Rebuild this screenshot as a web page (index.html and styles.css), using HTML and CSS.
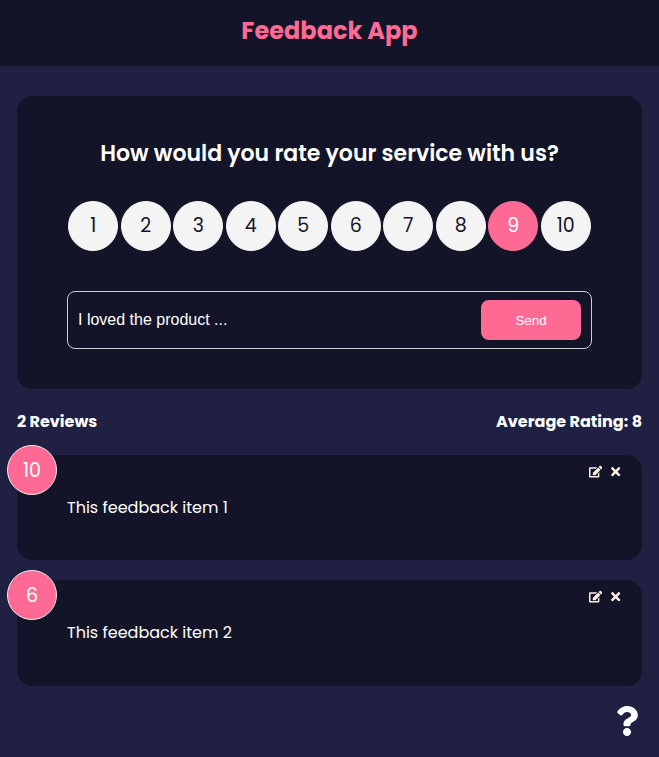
FILE: index.html
```html
<!DOCTYPE html>
<html lang="en">
<head>
<meta charset="utf-8">
<title>Feedback App</title>
<link rel="stylesheet" href="styles.css">
</head>
<body>
<svg class="sprite" aria-hidden="true">
  <symbol id="edit" viewBox="0 0 576 512"><path d="M402.6 83.2l90.2 90.2c3.8 3.8 3.8 10 0 13.8L274.4 405.6l-92.8 10.3c-12.4 1.4-22.9-9.1-21.5-21.5l10.3-92.8L388.8 83.2c3.8-3.8 10-3.8 13.8 0zm162-22.9l-48.8-48.8c-15.2-15.2-39.9-15.2-55.2 0l-35.4 35.4c-3.8 3.8-3.8 10 0 13.8l90.2 90.2c3.8 3.8 10 3.8 13.8 0l35.4-35.4c15.2-15.3 15.2-40 0-55.2zM384 346.2V448H64V128h229.8c3.2 0 6.2-1.3 8.5-3.5l40-40c7.6-7.6 2.2-20.5-8.5-20.5H48C21.5 64 0 85.5 0 112v352c0 26.5 21.5 48 48 48h352c26.5 0 48-21.5 48-48V306.2c0-10.7-12.9-16-20.5-8.5l-40 40c-2.2 2.3-3.5 5.3-3.5 8.5z"/></symbol>
  <symbol id="times" viewBox="0 0 352 512"><path d="M242.72 256l100.07-100.07c12.28-12.28 12.28-32.19 0-44.48l-22.24-22.24c-12.28-12.28-32.19-12.28-44.48 0L176 189.28 75.93 89.21c-12.28-12.28-32.19-12.28-44.48 0L9.21 111.45c-12.28 12.28-12.28 32.19 0 44.48L109.28 256 9.21 356.07c-12.28 12.28-12.28 32.19 0 44.48l22.24 22.24c12.28 12.28 32.2 12.28 44.48 0L176 322.72l100.07 100.07c12.28 12.28 32.2 12.28 44.48 0l22.24-22.24c12.28-12.28 12.28-32.19 0-44.48L242.72 256z"/></symbol>
</svg>
<header class="header"><h1 class="title">Feedback App</h1></header>
<main class="container">
  <section class="card form-card">
    <h2 class="question">How would you rate your service with us?</h2>
    <ul class="rating">
      <li>1</li><li>2</li><li>3</li><li>4</li><li>5</li><li>6</li><li>7</li><li>8</li><li class="selected">9</li><li>10</li>
    </ul>
    <div class="input-group">
      <span class="review-text">I loved the product ...</span>
      <button class="send">Send</button>
    </div>
  </section>
  <div class="stats"><h4 class="reviews">2 Reviews</h4><h4 class="average">Average Rating: 8</h4></div>
  <article class="card item">
    <div class="score">10</div>
    <div class="actions"><svg><use href="#edit"/></svg><svg><use href="#times"/></svg></div>
    <p class="item-text">This feedback item 1</p>
  </article>
  <article class="card item">
    <div class="score">6</div>
    <div class="actions"><svg><use href="#edit"/></svg><svg><use href="#times"/></svg></div>
    <p class="item-text">This feedback item 2</p>
  </article>
  <footer class="about">
    <svg viewBox="0 0 384 512"><path d="M202.021 0C122.202 0 70.503 32.703 29.914 91.026c-7.363 10.58-5.093 25.086 5.178 32.874l43.138 32.709c10.373 7.865 25.132 6.026 33.253-4.148 25.049-31.381 43.63-49.449 82.757-49.449 30.764 0 68.816 19.799 68.816 49.631 0 22.552-18.617 34.134-48.993 51.164-35.423 19.86-82.299 44.576-82.299 106.405V320c0 13.255 10.745 24 24 24h72.471c13.255 0 24-10.745 24-24v-5.773c0-42.86 125.268-44.645 125.268-160.627C377.504 66.256 286.902 0 202.021 0zM192 373.459c-38.196 0-69.271 31.075-69.271 69.271 0 38.195 31.075 69.27 69.271 69.27s69.271-31.075 69.271-69.271-31.075-69.27-69.271-69.27z"/></svg>
  </footer>
</main>
</body>
</html>
```
FILE: styles.css
```css
* { box-sizing: border-box; margin: 0; padding: 0; }
body {
  background: #202142;
  color: #fff;
  font: 16px/24px Poppins, Inter, sans-serif;
}
.sprite { display: none; }
.header { height: 66px; padding-top: 13px; background: #131428; text-align: center; }
.title { font-size: 24px; line-height: 36px; font-weight: 700; color: #ff6a95; }
.container { padding: 30px 17px 0; }
.card { background: #131428; border-radius: 15px; }
.form-card { height: 293px; padding: 41px 50px 40px; }
.question { font-size: 22px; line-height: 34px; font-weight: 600; text-align: center; white-space: nowrap; }
.rating { display: flex; justify-content: space-around; list-style: none; margin: 30px 0 40px; }
.rating li {
  width: 50px; height: 50px; border: 1px solid #f4f4f4; border-radius: 50%;
  background: #f4f4f4; color: #131428;
  font-size: 19px; line-height: 48px; text-align: center;
}
.rating .selected { background: #ff6a95; border-color: #ff6a95; color: #fff; }
.input-group {
  display: flex; align-items: center; justify-content: space-between;
  height: 58px; padding: 0 10px; border: 1px solid #ccc; border-radius: 8px;
}
.review-text { font: 16px "Liberation Sans", sans-serif; }
.send {
  width: 100px; height: 40px; border: 0; border-radius: 8px;
  background: #ff6a95; color: #fff; font: 13.333px "Liberation Sans", sans-serif;
}
.stats { display: flex; justify-content: space-between; margin: 21px 0; font-weight: 700; }
.item { position: relative; height: 105px; padding: 41px 50px 40px; margin-bottom: 20px; }
.item + .item { height: 106px; }
.score {
  position: absolute; top: -10px; left: -10px; width: 50px; height: 50px;
  border: 1px solid #eee; border-radius: 50%; background: #ff6a95;
  font-size: 19px; line-height: 50px; text-align: center;
}
.actions { position: absolute; top: 10px; right: 20px; display: flex; gap: 6px; }
.actions svg { width: 13.33px; height: 13.33px; fill: #ffefe6; }
.about { display: flex; justify-content: flex-end; }
.about svg { width: 30px; height: 30px; fill: #fff; }
```
